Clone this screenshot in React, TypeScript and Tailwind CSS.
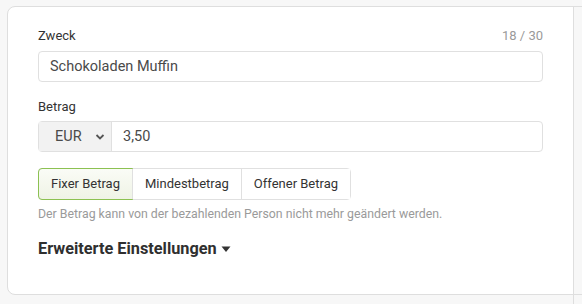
import { useState } from "react"

const modes = ["Fixer Betrag", "Mindestbetrag", "Offener Betrag"]

export default function App() {
  const [mode, setMode] = useState(0)

  return (
    <div
      className="relative w-[582px] h-[304px] overflow-hidden bg-[#f7f7f7] pt-[6px] pl-[7px]"
      style={{ fontFamily: "Roboto, 'Noto Sans', sans-serif" }}
    >
      <div className="flex w-[600px] h-[289px] rounded-l-lg border border-[#dedede] bg-white">
        <div className="w-[565px] pl-[30px] pr-[30px] pt-[19px]">
          <div className="flex items-center justify-between h-[20px] mb-[5px] text-[13px]">
            <span className="text-[#333]">Zweck</span>
            <span className="text-[#9a9a9a]">18 / 30</span>
          </div>
          <div className="flex items-center h-[31px] rounded border border-[#e0e0e0] px-[11px] text-[14.5px] text-[#4a4a4a]">
            Schokoladen Muffin
          </div>

          <div className="flex items-center h-[20px] mt-[15px] mb-[4px] text-[13px] text-[#333]">
            Betrag
          </div>
          <div className="flex h-[31px] rounded border border-[#e0e0e0] text-[14.5px] text-[#4a4a4a]">
            <div className="flex items-center justify-between w-[73px] bg-[#f2f2f2] border-r border-[#e0e0e0] pl-[16px] pr-[6px]">
              <span>EUR</span>
              <svg width="10" height="10" viewBox="0 0 10 10" className="mt-[1px]">
                <path d="M1.5 3 L5 6.5 L8.5 3" fill="none" stroke="#555" strokeWidth="1.8" />
              </svg>
            </div>
            <div className="flex items-center pl-[11px]">3,50</div>
          </div>

          <div className="flex mt-[16px] w-max rounded border border-[#e0e0e0] text-[13px] text-[#333]">
            {modes.map((m, i) => (
              <button
                key={m}
                onClick={() => setMode(i)}
                className={
                  i === mode
                    ? "-m-px h-[32px] px-[12px] rounded-l border border-[#8cc152] bg-gradient-to-b from-[#fafcf6] to-[#eff3e6]"
                    : "h-[30px] px-[12px] border-l border-[#e0e0e0] first:border-l-0 bg-white"
                }
              >
                {m}
              </button>
            ))}
          </div>

          <p className="mt-[6px] h-[16px] leading-[16px] text-[12.3px] text-[#9a9a9a]">
            Der Betrag kann von der bezahlenden Person nicht mehr geändert werden.
          </p>

          <button className="flex items-center gap-[4px] mt-[15px] h-[24px] text-[16.3px] font-bold text-[#2f2f2f]">
            Erweiterte Einstellungen
            <svg width="10" height="8" viewBox="0 0 10 8">
              <path d="M0.5 1.5 H9.5 L5 7 Z" fill="#333" />
            </svg>
          </button>
        </div>
        <div className="w-[9px] border-l border-[#dedede] bg-[#f7f7f7]" />
      </div>
      <div className="absolute left-[573px] top-[289px] h-[15px] border-l border-[#dedede]" />
    </div>
  )
}
